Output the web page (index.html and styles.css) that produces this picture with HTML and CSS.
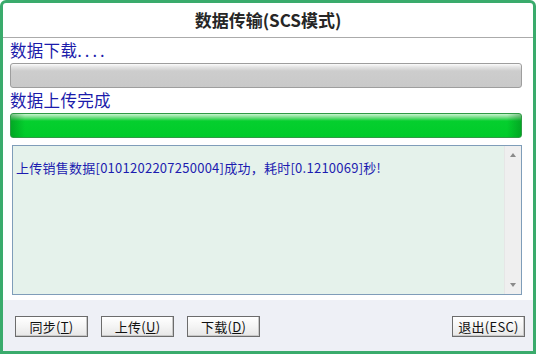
FILE: index.html
```html
<!DOCTYPE html>
<html lang="zh">
<head>
<meta charset="utf-8">
<link rel="stylesheet" href="styles.css">
</head>
<body>
<div class="window">
  <div class="title">数据传输(SCS模式)</div>
  <div class="content">
    <div class="label">数据下载<span class="dots">....</span></div>
    <div class="bar bar-gray"></div>
    <div class="label">数据上传完成</div>
    <div class="bar bar-green"></div>
    <div class="log">
      <div class="log-text">上传销售数据[0101202207250004]成功，耗时[0.1210069]秒!</div>
      <div class="scroll">
        <span class="arrow up"></span>
        <span class="arrow down"></span>
      </div>
    </div>
  </div>
  <div class="footer">
    <div class="btns">
      <button class="btn">同步(<u>T</u>)</button>
      <button class="btn">上传(<u>U</u>)</button>
      <button class="btn">下载(<u>D</u>)</button>
    </div>
    <button class="btn">退出(ESC)</button>
  </div>
</div>
</body>
</html>
```

FILE: styles.css
```css
* { box-sizing: border-box; }
html, body { margin: 0; padding: 0; }
body {
  width: 536px;
  height: 354px;
  background: #ffffff;
  font-family: "Noto Sans CJK SC", "Noto Sans", sans-serif;
}
.window {
  width: 536px;
  height: 354px;
  border: 3px solid #3aab6c;
  border-radius: 6px 6px 0 0;
  display: flex;
  flex-direction: column;
  background: #ffffff;
}
.title {
  height: 35px;
  line-height: 33px;
  text-align: center;
  font-size: 17px;
  font-weight: bold;
  color: #262626;
  border-bottom: 1px solid #ababab;
}
.content {
  display: flex;
  flex-direction: column;
  padding-left: 7px;
  flex: 0 0 auto;
}
.label {
  height: 25px;
  line-height: 24px;
  font-size: 16.5px;
  color: #1b1bab;
  letter-spacing: 0.3px;
}
.dots { letter-spacing: 3px; }
.bar {
  width: 512px;
  height: 25px;
  border-radius: 3px;
}
.bar-gray {
  border: 1px solid #9e9e9e;
  background: linear-gradient(#fbfbfb 0, #e4e4e4 3px, #cdcdcd 7px, #c9c9c9 100%);
}
.bar-green {
  border: 1px solid #2f9a45;
  background:
    linear-gradient(90deg, rgba(0,100,20,0.35) 0, rgba(0,100,20,0) 14px, rgba(0,100,20,0) calc(100% - 14px), rgba(0,100,20,0.35) 100%),
    linear-gradient(#c8f5cf 0, #7fe08f 3px, #05cf2e 7px, #00cb2a 100%);
}
.log {
  margin-top: 7px;
  margin-left: 2px;
  width: 510px;
  height: 150px;
  border: 1px solid #7f9db9;
  background: #e5f2eb;
  display: flex;
}
.log-text {
  flex: 1;
  padding: 14px 0 0 3px;
  font-size: 13px;
  line-height: 16px;
  color: #1c1cb0;
  white-space: nowrap;
  letter-spacing: 0.25px;
}
.scroll {
  width: 17px;
  background: #efefef;
  border-left: 1px solid #e6e6e6;
  display: flex;
  flex-direction: column;
  justify-content: space-between;
  align-items: center;
  padding: 7px 0 7px;
}
.arrow {
  width: 0;
  height: 0;
  border-left: 3.5px solid transparent;
  border-right: 3.5px solid transparent;
}
.arrow.up { border-bottom: 4px solid #8a8a8a; }
.arrow.down { border-top: 4px solid #8a8a8a; }
.footer {
  margin-top: auto;
  height: 51px;
  background: #eef0f6;
  display: flex;
  justify-content: space-between;
  align-items: flex-start;
  padding: 16px 8px 0 12px;
}
.btns {
  display: flex;
  gap: 13px;
}
.btn {
  width: 73px;
  height: 21px;
  padding: 0;
  border: 1px solid #6c6c6c;
  border-radius: 0;
  background: linear-gradient(#ffffff 0, #f4f4f4 50%, #e6e6e6 100%);
  font-family: "Noto Sans CJK SC", "Noto Sans", sans-serif;
  font-size: 13px;
  line-height: 18px;
  color: #111111;
  letter-spacing: 0.3px;
  box-shadow: inset -1px -1px 0 #c8c8c8;
}
.btn u { text-decoration: underline; }
```
